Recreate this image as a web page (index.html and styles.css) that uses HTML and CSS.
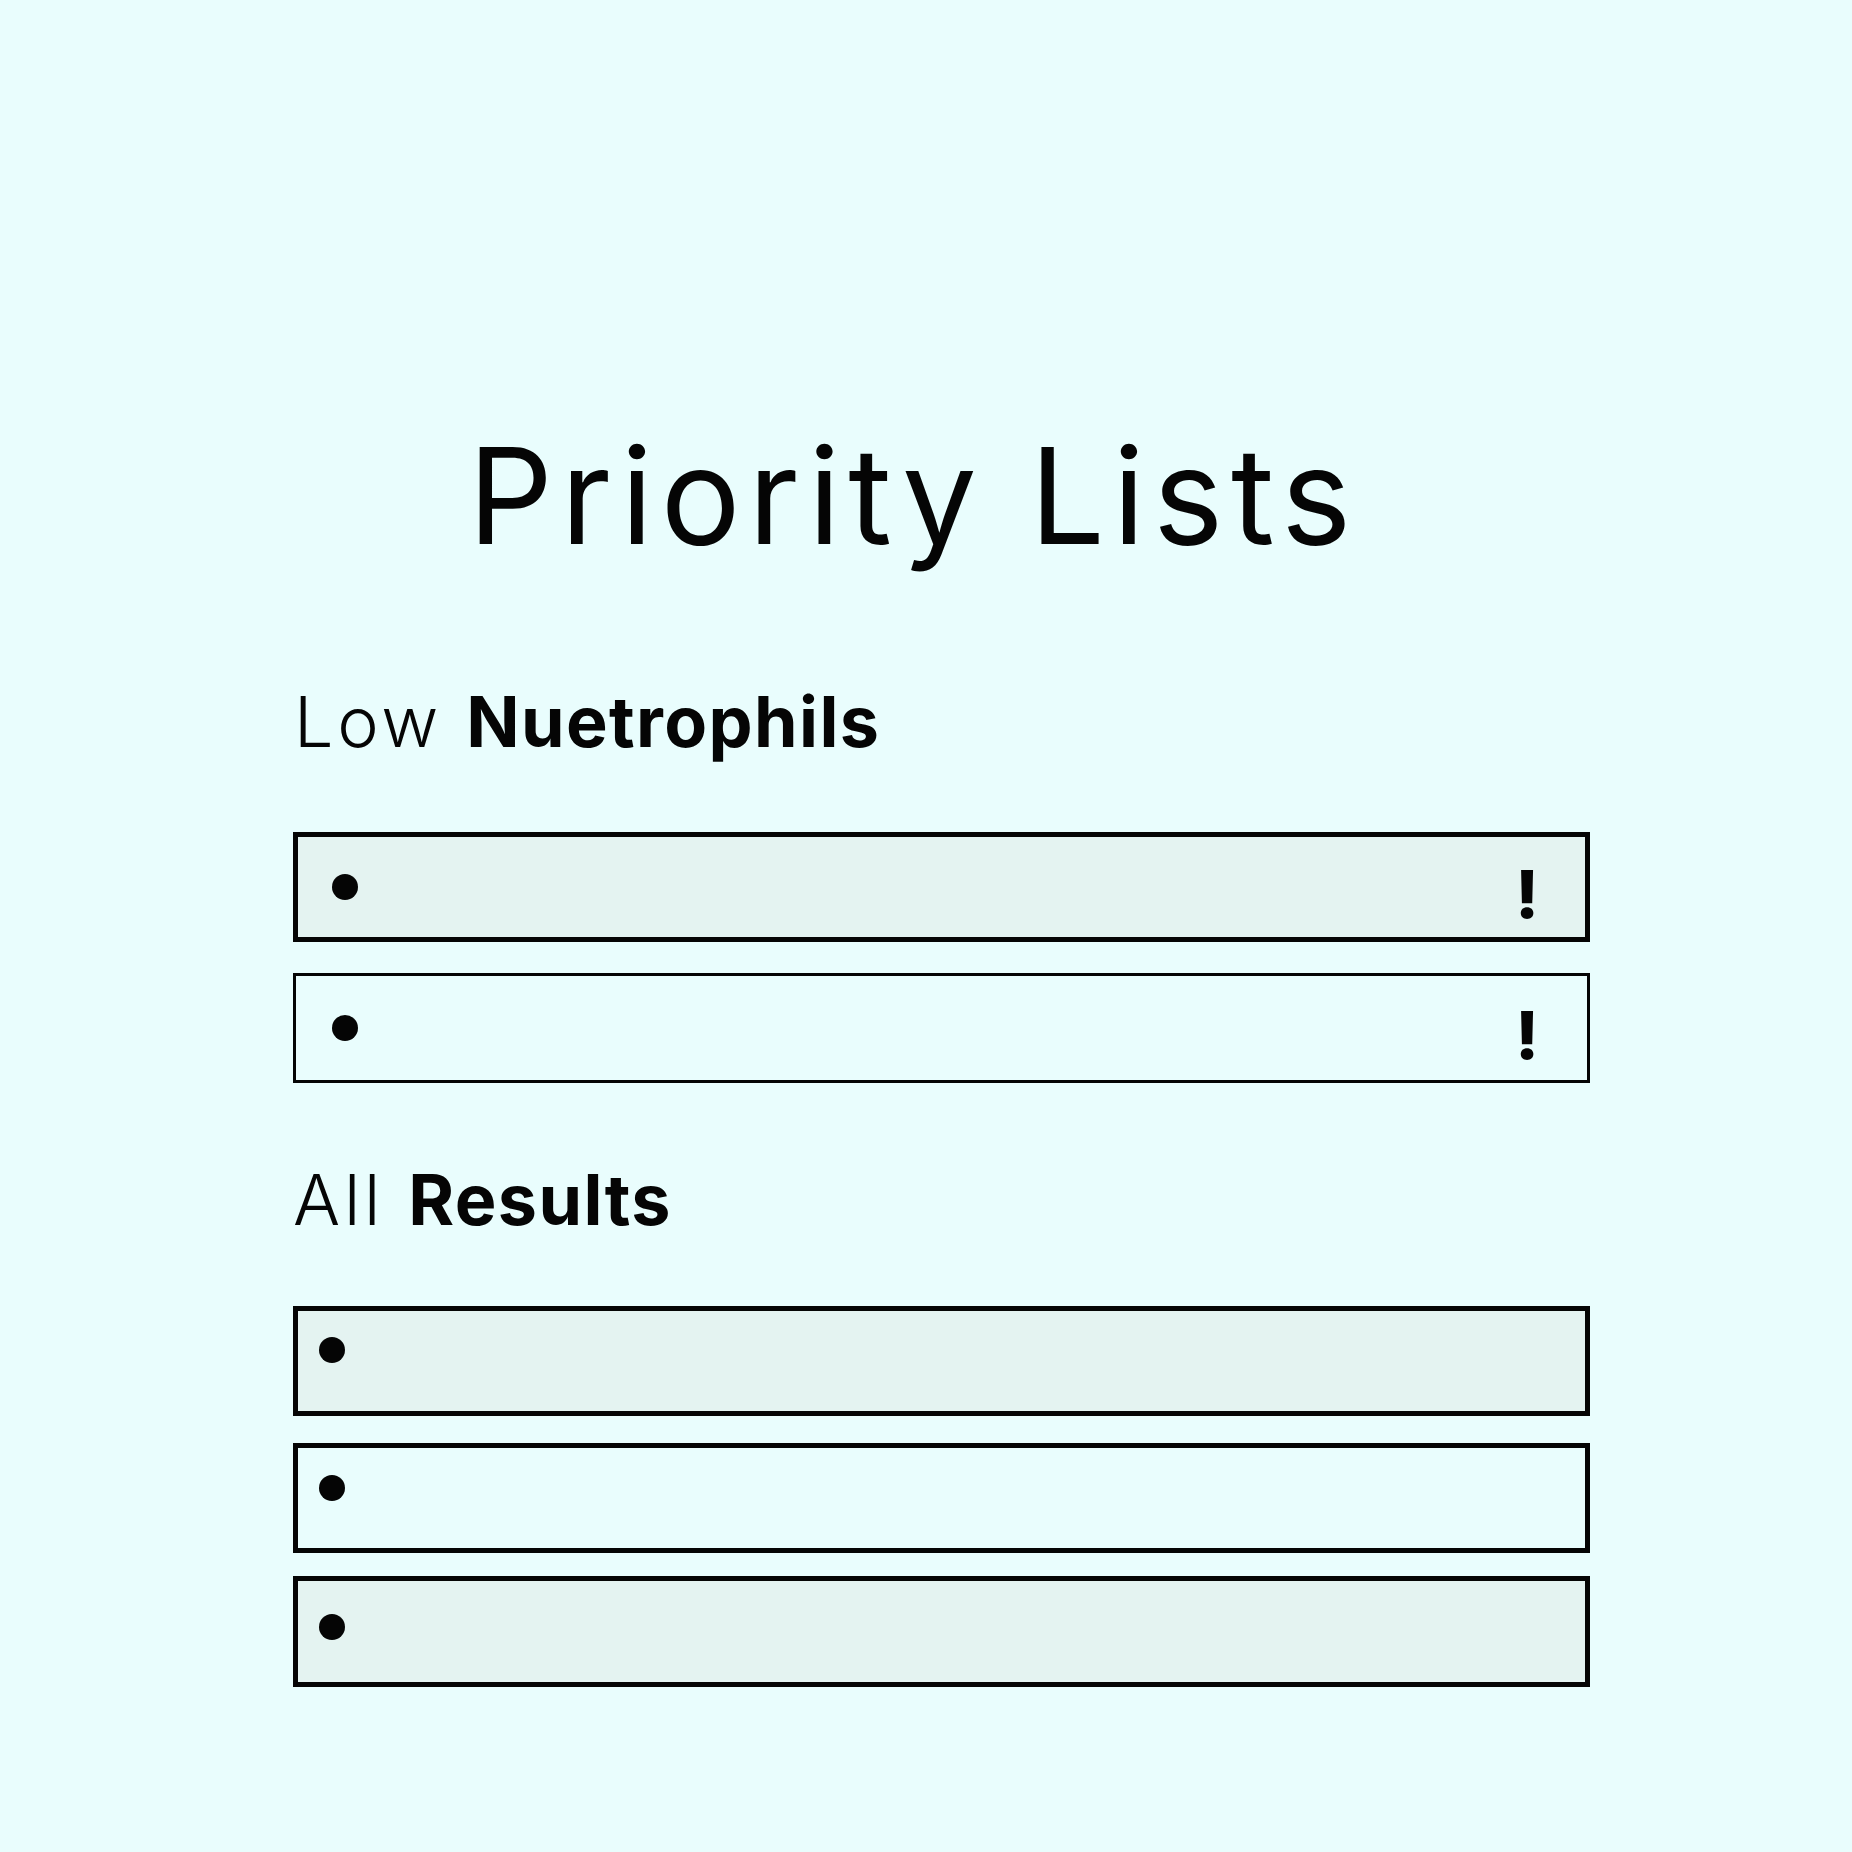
FILE: index.html
```html
<!DOCTYPE html>
<html lang="en">
<head>
<meta charset="utf-8">
<title>Priority Lists</title>
<link rel="stylesheet" href="styles.css">
</head>
<body>
<main class="page">
  <h1 class="title">Priority Lists</h1>

  <section class="group group-low">
    <h2 class="group-title"><span class="light">Low</span> <strong>Nuetrophils</strong></h2>
    <ul class="list">
      <li class="row row-priority row-shaded"><span class="dot"></span><span class="alert">!</span></li>
      <li class="row row-priority row-thin"><span class="dot"></span><span class="alert">!</span></li>
    </ul>
  </section>

  <section class="group group-all">
    <h2 class="group-title"><span class="light">All</span> <strong>Results</strong></h2>
    <ul class="list">
      <li class="row row-result row-shaded"><span class="dot"></span></li>
      <li class="row row-result"><span class="dot"></span></li>
      <li class="row row-result row-shaded"><span class="dot"></span></li>
    </ul>
  </section>
</main>
</body>
</html>
```

FILE: styles.css
```css
* { box-sizing: border-box; }

html, body {
  margin: 0;
  padding: 0;
  background: #e9fdfd;
  color: #050505;
  font-family: Inter, "Noto Sans", "Liberation Sans", sans-serif;
}

.page {
  width: 1297px;
  margin-left: 293px;
  padding-top: 429px;
  padding-bottom: 120px;
}

.title {
  margin: 0;
  padding-left: 175px;
  font-size: 133px;
  line-height: 1;
  font-weight: 400;
  letter-spacing: 7.8px;
}

.group-title {
  margin: 0;
  font-size: 70px;
  line-height: 1;
  font-weight: 650;
  letter-spacing: 1.4px;
  word-spacing: 6px;
}

.group-title strong {
  font-weight: 650;
}

.group-title .light {
  font-weight: 300;
  letter-spacing: 3.8px;
}

.group-low {
  margin-top: 125px;
}

.group-low .group-title {
  padding-left: 1px;
}

.group-all {
  margin-top: 82px;
}

.list {
  list-style: none;
  margin: 0;
  padding: 0;
}

.group-low .list { margin-top: 75px; }
.group-all .list { margin-top: 71px; }

.row {
  display: flex;
  height: 110px;
  border: 5px solid #050505;
}

.row-shaded {
  background: #e4f3f1;
}

.row-thin {
  border-width: 3px;
}

.dot {
  width: 26px;
  height: 26px;
  border-radius: 50%;
  background: #050505;
  flex: none;
}

.row-priority {
  align-items: center;
  justify-content: space-between;
  padding: 0 46px 0 34px;
}

.row-priority.row-thin {
  padding: 0 48px 0 36px;
}

.row-priority + .row-priority {
  margin-top: 31px;
}

.alert {
  font-size: 66px;
  line-height: 1;
  font-weight: 800;
  padding-top: 14px;
}

.row-result {
  align-items: flex-start;
  padding: 26px 0 0 21px;
}

.row-result:nth-child(2) {
  margin-top: 27px;
  padding-top: 27px;
}

.row-result:nth-child(3) {
  margin-top: 23px;
  height: 111px;
  padding-top: 33px;
}
```
